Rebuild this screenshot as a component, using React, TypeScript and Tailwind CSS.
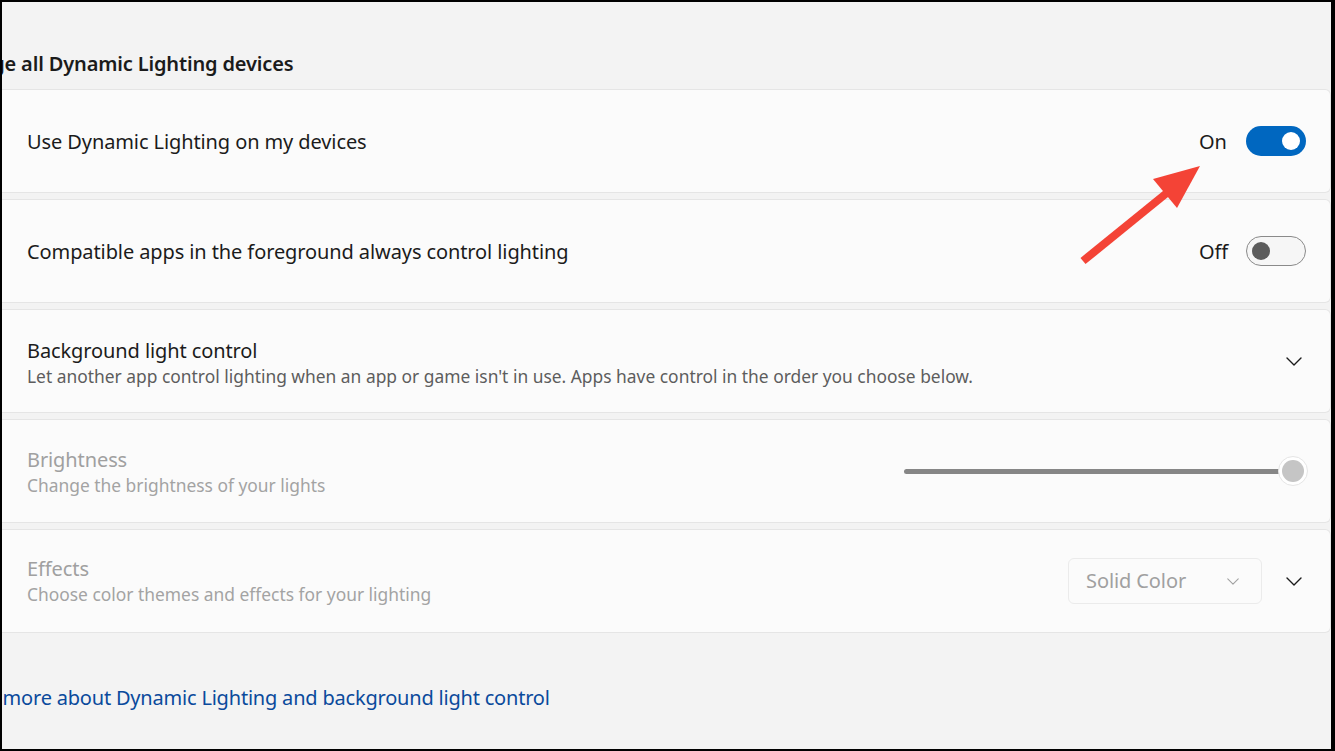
import type { ReactNode } from "react";

const font = { fontFamily: '"Noto Sans", "Open Sans", sans-serif' };

function Chevron({ className }: { className?: string }) {
  return (
    <svg viewBox="0 0 16 9" className={className} fill="none">
      <path d="M1 1l7 7 7-7" stroke="currentColor" strokeWidth="1.4" strokeLinecap="round" strokeLinejoin="round" />
    </svg>
  );
}

function Card({ children }: { children: ReactNode }) {
  return (
    <div className="flex h-[104px] items-center rounded-r-[6px] border border-l-0 border-[#e5e5e5] bg-[#fbfbfb] pl-[25px] pr-[24px]">
      {children}
    </div>
  );
}

function Toggle({ on }: { on: boolean }) {
  return (
    <div className="flex items-center">
      <span className="w-[47px] pt-[2px] text-[20px] text-[#1b1b1b]">{on ? "On" : "Off"}</span>
      {on ? (
        <div className="flex h-[30px] w-[60px] items-center justify-end rounded-full bg-[#0067c0] pr-[6px]">
          <div className="h-[18px] w-[18px] rounded-full bg-white" />
        </div>
      ) : (
        <div className="flex h-[30px] w-[60px] items-center rounded-full border-[1.5px] border-[#8a8a8a] bg-[#f6f6f6] pl-[5px]">
          <div className="h-[18px] w-[18px] rounded-full bg-[#5c5c5c]" />
        </div>
      )}
    </div>
  );
}

export default function App() {
  return (
    <div
      className="relative h-[751px] w-[1335px] overflow-hidden border-b-2 border-l-2 border-r-4 border-t-2 border-black bg-[#f3f3f3]"
      style={font}
    >
      <div className="pt-[48px]">
        <h2 className="-ml-[64px] mb-[11px] whitespace-nowrap text-[20px] font-semibold leading-[28px] tracking-[-0.15px] text-[#1b1b1b]">
          Manage all Dynamic Lighting devices
        </h2>

        <div className="flex flex-col gap-[6px] tracking-[-0.1px]">
          <Card>
            <span className="flex-1 pt-[2px] text-[20px] text-[#1b1b1b]">Use Dynamic Lighting on my devices</span>
            <Toggle on />
          </Card>

          <Card>
            <span className="flex-1 pt-[2px] text-[20px] text-[#1b1b1b]">
              Compatible apps in the foreground always control lighting
            </span>
            <Toggle on={false} />
          </Card>

          <Card>
            <div className="flex flex-1 flex-col pt-[4px]">
              <span className="text-[20px] leading-[26px] text-[#1b1b1b]">Background light control</span>
              <span className="text-[17.4px] leading-[24px] tracking-normal text-[#5d5d5d]">
                Let another app control lighting when an app or game isn't in use. Apps have control in the order you
                choose below.
              </span>
            </div>
            <Chevron className="mr-[4px] h-[9px] w-[16px] text-[#1b1b1b]" />
          </Card>

          <Card>
            <div className="flex flex-1 flex-col pt-[2px]">
              <span className="text-[20px] leading-[26px] text-[#a0a0a0]">Brightness</span>
              <span className="text-[17.4px] leading-[24px] tracking-normal text-[#a3a3a3]">
                Change the brightness of your lights
              </span>
            </div>
            <div className="mr-[-2px] flex w-[404px] items-center">
              <div className="h-[5px] flex-1 rounded-full bg-[#868686]" />
              <div className="-ml-[6px] flex h-[30px] w-[30px] items-center justify-center rounded-full border border-[#e5e5e5] bg-white">
                <div className="h-[22px] w-[22px] rounded-full bg-[#c5c5c5]" />
              </div>
            </div>
          </Card>

          <Card>
            <div className="flex flex-1 flex-col">
              <span className="text-[20px] leading-[26px] text-[#a0a0a0]">Effects</span>
              <span className="text-[17.4px] leading-[24px] tracking-normal text-[#a3a3a3]">
                Choose color themes and effects for your lighting
              </span>
            </div>
            <div className="flex h-[46px] w-[194px] items-center justify-between rounded-[6px] border border-[#ebebeb] bg-[#fbfbfb] pl-[17px] pr-[22px]">
              <span className="text-[20px] text-[#a0a0a0]">Solid Color</span>
              <Chevron className="h-[7px] w-[12px] text-[#a0a0a0]" />
            </div>
            <Chevron className="ml-[24px] mr-[4px] h-[9px] w-[16px] text-[#1b1b1b]" />
          </Card>
        </div>

        <a className="-ml-[57px] mt-[51px] block whitespace-nowrap text-[20px] leading-[28px] tracking-[-0.2px] text-[#0a4a9c]">
          Learn more about Dynamic Lighting and background light control
        </a>
      </div>

      <svg className="pointer-events-none absolute -left-[2px] -top-[2px]" width="1335" height="751">
        <line x1="1083" y1="261" x2="1168" y2="192" stroke="#f44336" strokeWidth="8" />
        <polygon points="1200,166 1153,179 1177,208" fill="#f44336" />
      </svg>
    </div>
  );
}
